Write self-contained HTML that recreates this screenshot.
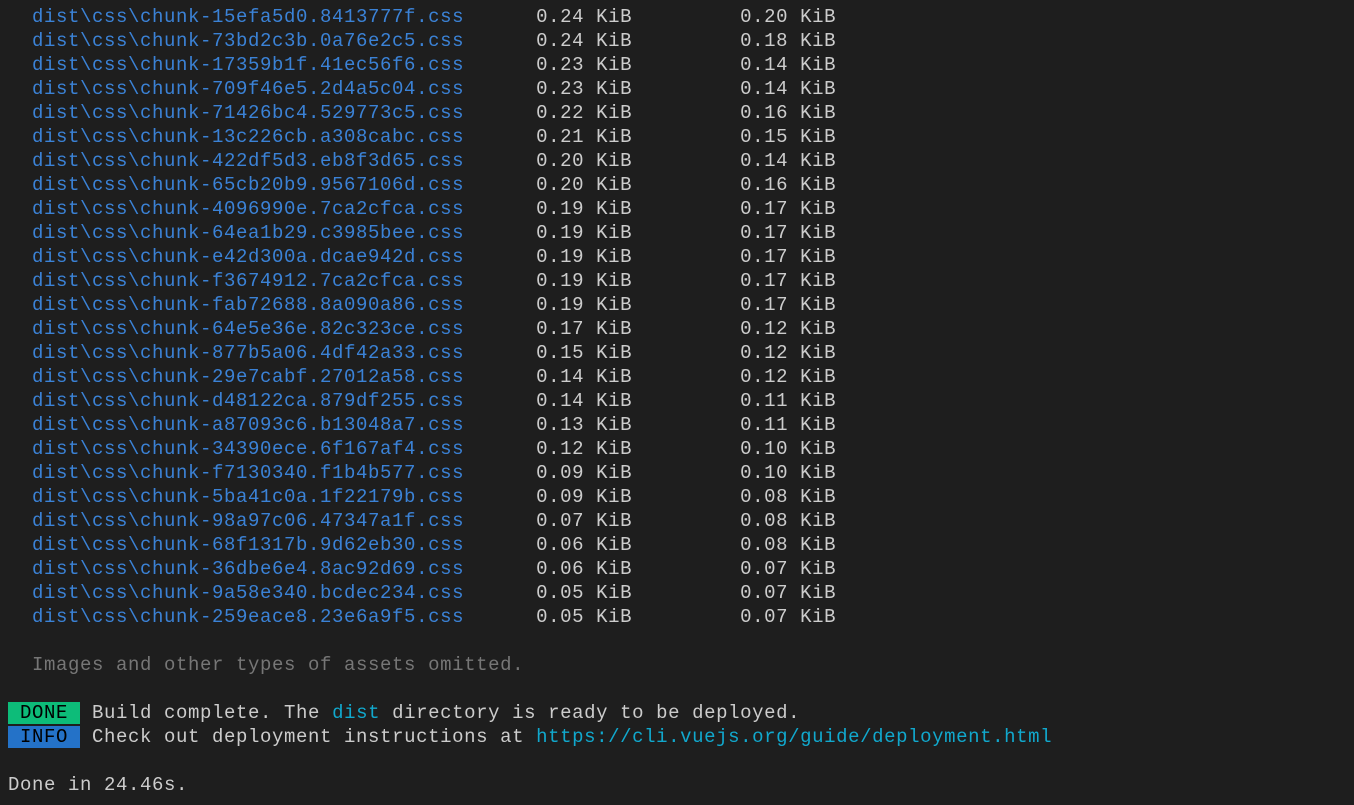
<!DOCTYPE html>
<html><head><meta charset="utf-8"><style>
html,body{margin:0;background:#1e1e1e;width:1354px;height:805px;overflow:hidden}
pre{margin:0;padding:5px 0 0 8px;font-family:"Liberation Mono",monospace;font-size:19px;letter-spacing:0.6px;line-height:24px;color:#cccccc}
.b{color:#3b82d6}.g{color:#767676}.c{color:#11a8cd}
.d{background:#0dbc79;color:#000}.i{background:#2472c8;color:#000}
</style></head><body><pre><span class="b">  dist\css\chunk-15efa5d0.8413777f.css</span>      0.24 KiB         0.20 KiB
<span class="b">  dist\css\chunk-73bd2c3b.0a76e2c5.css</span>      0.24 KiB         0.18 KiB
<span class="b">  dist\css\chunk-17359b1f.41ec56f6.css</span>      0.23 KiB         0.14 KiB
<span class="b">  dist\css\chunk-709f46e5.2d4a5c04.css</span>      0.23 KiB         0.14 KiB
<span class="b">  dist\css\chunk-71426bc4.529773c5.css</span>      0.22 KiB         0.16 KiB
<span class="b">  dist\css\chunk-13c226cb.a308cabc.css</span>      0.21 KiB         0.15 KiB
<span class="b">  dist\css\chunk-422df5d3.eb8f3d65.css</span>      0.20 KiB         0.14 KiB
<span class="b">  dist\css\chunk-65cb20b9.9567106d.css</span>      0.20 KiB         0.16 KiB
<span class="b">  dist\css\chunk-4096990e.7ca2cfca.css</span>      0.19 KiB         0.17 KiB
<span class="b">  dist\css\chunk-64ea1b29.c3985bee.css</span>      0.19 KiB         0.17 KiB
<span class="b">  dist\css\chunk-e42d300a.dcae942d.css</span>      0.19 KiB         0.17 KiB
<span class="b">  dist\css\chunk-f3674912.7ca2cfca.css</span>      0.19 KiB         0.17 KiB
<span class="b">  dist\css\chunk-fab72688.8a090a86.css</span>      0.19 KiB         0.17 KiB
<span class="b">  dist\css\chunk-64e5e36e.82c323ce.css</span>      0.17 KiB         0.12 KiB
<span class="b">  dist\css\chunk-877b5a06.4df42a33.css</span>      0.15 KiB         0.12 KiB
<span class="b">  dist\css\chunk-29e7cabf.27012a58.css</span>      0.14 KiB         0.12 KiB
<span class="b">  dist\css\chunk-d48122ca.879df255.css</span>      0.14 KiB         0.11 KiB
<span class="b">  dist\css\chunk-a87093c6.b13048a7.css</span>      0.13 KiB         0.11 KiB
<span class="b">  dist\css\chunk-34390ece.6f167af4.css</span>      0.12 KiB         0.10 KiB
<span class="b">  dist\css\chunk-f7130340.f1b4b577.css</span>      0.09 KiB         0.10 KiB
<span class="b">  dist\css\chunk-5ba41c0a.1f22179b.css</span>      0.09 KiB         0.08 KiB
<span class="b">  dist\css\chunk-98a97c06.47347a1f.css</span>      0.07 KiB         0.08 KiB
<span class="b">  dist\css\chunk-68f1317b.9d62eb30.css</span>      0.06 KiB         0.08 KiB
<span class="b">  dist\css\chunk-36dbe6e4.8ac92d69.css</span>      0.06 KiB         0.07 KiB
<span class="b">  dist\css\chunk-9a58e340.bcdec234.css</span>      0.05 KiB         0.07 KiB
<span class="b">  dist\css\chunk-259eace8.23e6a9f5.css</span>      0.05 KiB         0.07 KiB

<span class="g">  Images and other types of assets omitted.</span>

<span class="d"> DONE </span> Build complete. The <span class="c">dist</span> directory is ready to be deployed.
<span class="i"> INFO </span> Check out deployment instructions at <span class="c">https://cli.vuejs.org/guide/deployment.html</span>

Done in 24.46s.
</pre></body></html>
